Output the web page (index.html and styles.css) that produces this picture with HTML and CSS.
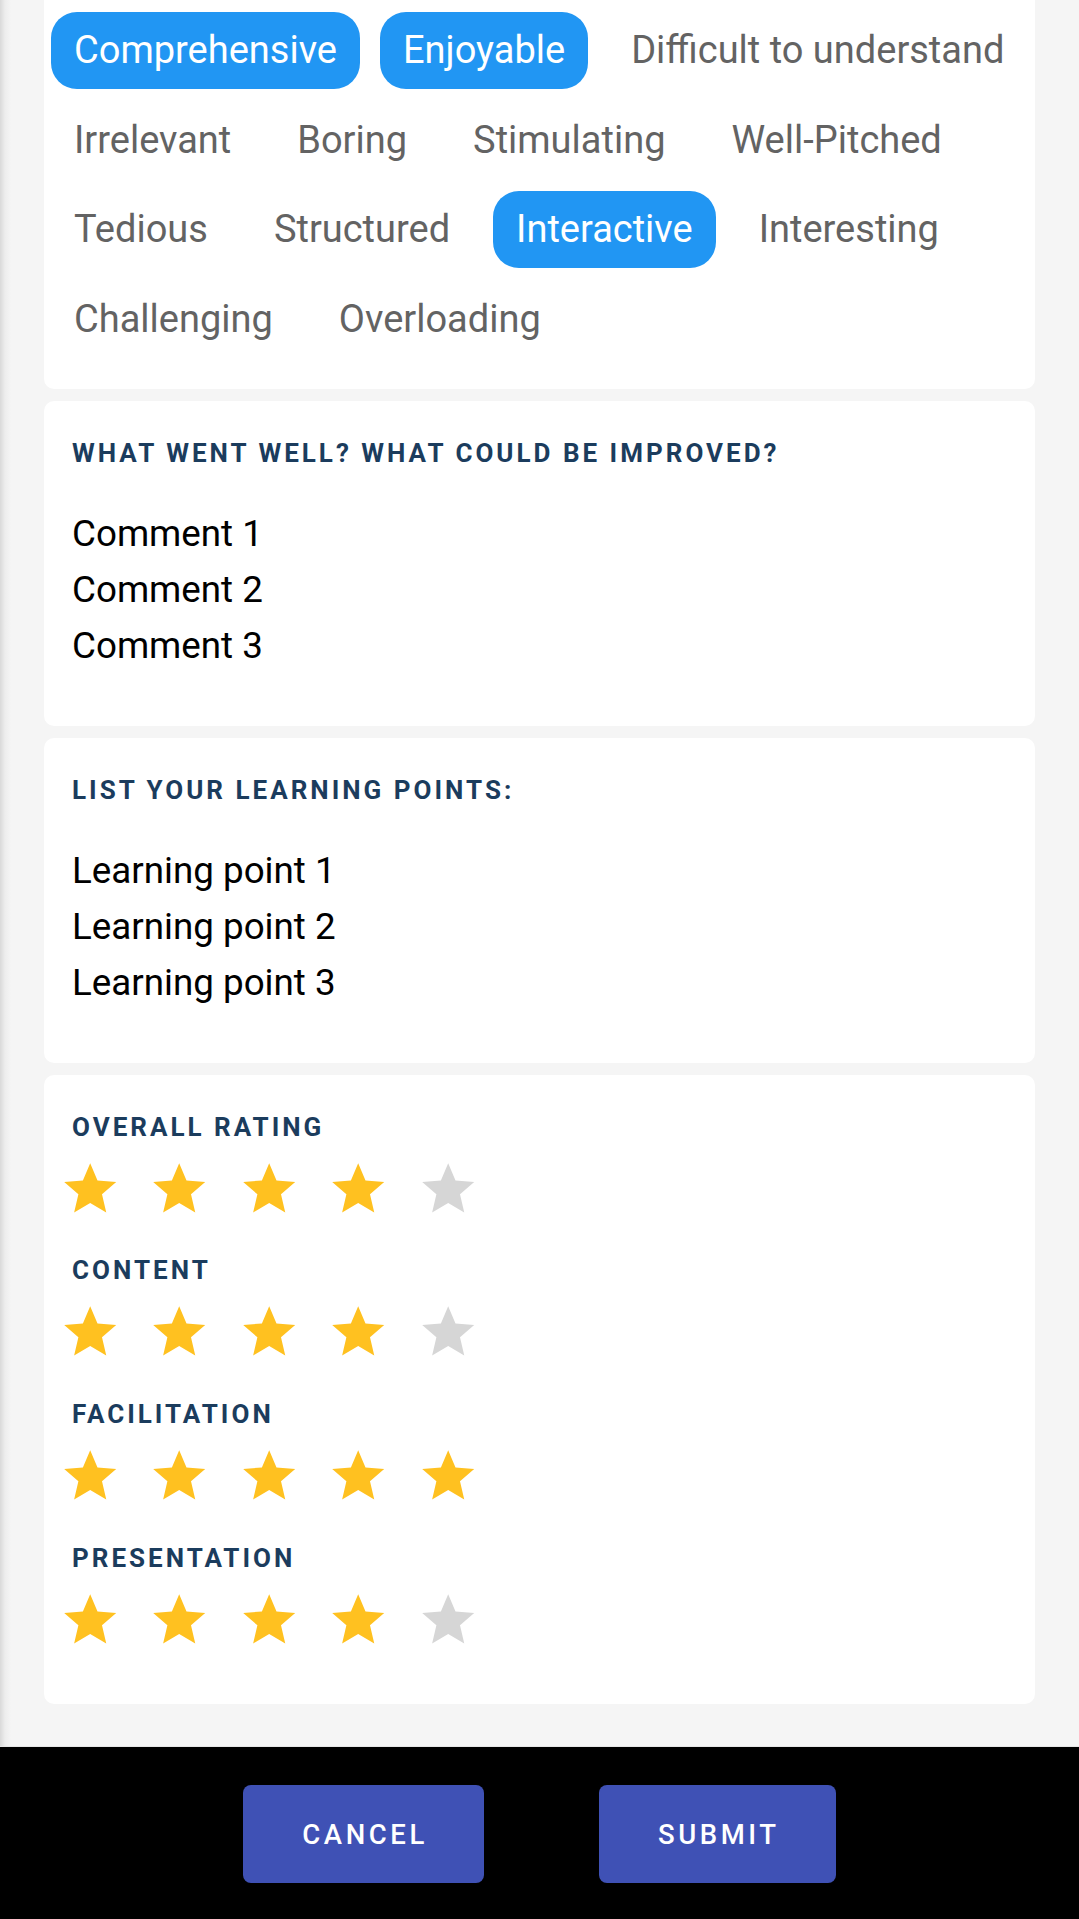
FILE: index.html
```html
<!DOCTYPE html>
<html lang="en">
<head>
<meta charset="utf-8">
<title>Feedback</title>
<link rel="stylesheet" href="styles.css">
</head>
<body>
<div class="screen">
  <main class="content">
    <section class="card card-tags">
      <div class="tags">
        <span class="tag on">Comprehensive</span>
        <span class="tag on">Enjoyable</span>
        <span class="tag">Difficult to understand</span>
        <span class="tag">Irrelevant</span>
        <span class="tag">Boring</span>
        <span class="tag">Stimulating</span>
        <span class="tag">Well-Pitched</span>
        <span class="tag">Tedious</span>
        <span class="tag">Structured</span>
        <span class="tag on">Interactive</span>
        <span class="tag">Interesting</span>
        <span class="tag">Challenging</span>
        <span class="tag">Overloading</span>
      </div>
    </section>

    <section class="card card-text">
      <h2 class="label">WHAT WENT WELL? WHAT COULD BE IMPROVED?</h2>
      <ul class="lines">
        <li>Comment 1</li>
        <li>Comment 2</li>
        <li>Comment 3</li>
      </ul>
    </section>

    <section class="card card-text">
      <h2 class="label">LIST YOUR LEARNING POINTS:</h2>
      <ul class="lines">
        <li>Learning point 1</li>
        <li>Learning point 2</li>
        <li>Learning point 3</li>
      </ul>
    </section>

    <section class="card card-rating">
      <div class="rating">
        <h2 class="label">OVERALL RATING</h2>
        <div class="stars">
          <svg class="star on" viewBox="0 0 24 24"><path d="M12 17.27L18.18 21l-1.64-7.03L22 9.24l-7.19-.61L12 2 9.19 8.63 2 9.24l5.46 4.730L5.82 21z"/></svg>
          <svg class="star on" viewBox="0 0 24 24"><path d="M12 17.27L18.18 21l-1.64-7.03L22 9.24l-7.19-.61L12 2 9.19 8.63 2 9.24l5.46 4.73L5.82 21z"/></svg>
          <svg class="star on" viewBox="0 0 24 24"><path d="M12 17.27L18.18 21l-1.64-7.03L22 9.24l-7.19-.61L12 2 9.19 8.63 2 9.24l5.46 4.73L5.82 21z"/></svg>
          <svg class="star on" viewBox="0 0 24 24"><path d="M12 17.27L18.18 21l-1.64-7.03L22 9.24l-7.19-.61L12 2 9.19 8.63 2 9.24l5.46 4.73L5.82 21z"/></svg>
          <svg class="star" viewBox="0 0 24 24"><path d="M12 17.27L18.18 21l-1.64-7.03L22 9.24l-7.19-.61L12 2 9.19 8.63 2 9.24l5.46 4.73L5.82 21z"/></svg>
        </div>
      </div>
      <div class="rating">
        <h2 class="label">CONTENT</h2>
        <div class="stars">
          <svg class="star on" viewBox="0 0 24 24"><path d="M12 17.27L18.18 21l-1.64-7.03L22 9.24l-7.19-.61L12 2 9.19 8.63 2 9.24l5.46 4.73L5.82 21z"/></svg>
          <svg class="star on" viewBox="0 0 24 24"><path d="M12 17.27L18.18 21l-1.64-7.03L22 9.24l-7.19-.61L12 2 9.19 8.63 2 9.24l5.46 4.73L5.82 21z"/></svg>
          <svg class="star on" viewBox="0 0 24 24"><path d="M12 17.27L18.18 21l-1.64-7.03L22 9.24l-7.19-.61L12 2 9.19 8.63 2 9.24l5.46 4.73L5.82 21z"/></svg>
          <svg class="star on" viewBox="0 0 24 24"><path d="M12 17.27L18.18 21l-1.64-7.03L22 9.24l-7.19-.61L12 2 9.19 8.63 2 9.24l5.46 4.73L5.82 21z"/></svg>
          <svg class="star" viewBox="0 0 24 24"><path d="M12 17.27L18.18 21l-1.64-7.03L22 9.24l-7.19-.61L12 2 9.19 8.63 2 9.24l5.46 4.73L5.82 21z"/></svg>
        </div>
      </div>
      <div class="rating">
        <h2 class="label">FACILITATION</h2>
        <div class="stars">
          <svg class="star on" viewBox="0 0 24 24"><path d="M12 17.27L18.18 21l-1.64-7.03L22 9.24l-7.19-.61L12 2 9.19 8.63 2 9.24l5.46 4.73L5.82 21z"/></svg>
          <svg class="star on" viewBox="0 0 24 24"><path d="M12 17.27L18.18 21l-1.64-7.03L22 9.24l-7.19-.61L12 2 9.19 8.63 2 9.24l5.46 4.73L5.82 21z"/></svg>
          <svg class="star on" viewBox="0 0 24 24"><path d="M12 17.27L18.18 21l-1.64-7.03L22 9.24l-7.19-.61L12 2 9.19 8.63 2 9.24l5.46 4.73L5.82 21z"/></svg>
          <svg class="star on" viewBox="0 0 24 24"><path d="M12 17.27L18.18 21l-1.64-7.03L22 9.24l-7.19-.61L12 2 9.19 8.63 2 9.24l5.46 4.73L5.82 21z"/></svg>
          <svg class="star on" viewBox="0 0 24 24"><path d="M12 17.27L18.18 21l-1.64-7.03L22 9.24l-7.19-.61L12 2 9.19 8.63 2 9.24l5.46 4.73L5.82 21z"/></svg>
        </div>
      </div>
      <div class="rating">
        <h2 class="label">PRESENTATION</h2>
        <div class="stars">
          <svg class="star on" viewBox="0 0 24 24"><path d="M12 17.27L18.18 21l-1.64-7.03L22 9.24l-7.19-.61L12 2 9.19 8.63 2 9.24l5.46 4.73L5.82 21z"/></svg>
          <svg class="star on" viewBox="0 0 24 24"><path d="M12 17.27L18.18 21l-1.64-7.03L22 9.24l-7.19-.61L12 2 9.19 8.63 2 9.24l5.46 4.73L5.82 21z"/></svg>
          <svg class="star on" viewBox="0 0 24 24"><path d="M12 17.27L18.18 21l-1.64-7.03L22 9.24l-7.19-.61L12 2 9.19 8.63 2 9.24l5.46 4.73L5.82 21z"/></svg>
          <svg class="star on" viewBox="0 0 24 24"><path d="M12 17.27L18.18 21l-1.64-7.03L22 9.24l-7.19-.61L12 2 9.19 8.63 2 9.24l5.46 4.73L5.82 21z"/></svg>
          <svg class="star" viewBox="0 0 24 24"><path d="M12 17.27L18.18 21l-1.64-7.03L22 9.24l-7.19-.61L12 2 9.19 8.63 2 9.24l5.46 4.73L5.82 21z"/></svg>
        </div>
      </div>
    </section>
  </main>

  <footer class="footer">
    <button class="btn" type="button">CANCEL</button>
    <button class="btn" type="button">SUBMIT</button>
  </footer>
</div>
</body>
</html>
```

FILE: styles.css
```css
* {
  box-sizing: border-box;
}

html, body {
  margin: 0;
  padding: 0;
}

body {
  width: 1079px;
  height: 1919px;
  overflow: hidden;
  font-family: Roboto, "Liberation Sans", Arial, sans-serif;
  background: #f5f5f5;
}

.screen {
  display: flex;
  flex-direction: column;
  height: 1919px;
}

.content {
  flex: 1;
  padding: 0 44px;
  background: linear-gradient(90deg, #d9d9d9 0px, #ededed 5px, #f5f5f5 11px);
}

.card {
  background: #ffffff;
  border-radius: 10px;
  margin-bottom: 12px;
}

/* ---------- tag chips ---------- */
.card-tags {
  border-radius: 0 0 10px 10px;
  padding: 12px 7px 31px 7px;
}

.tags {
  display: flex;
  flex-wrap: wrap;
  gap: 12.5px 20px;
}

.tag {
  display: inline-block;
  height: 77px;
  line-height: 77px;
  padding: 0 23px;
  border-radius: 26px;
  font-size: 38px;
  color: #636363;
  white-space: nowrap;
}

.tag.on {
  background: #2196f3;
  color: #ffffff;
}

/* ---------- labels ---------- */
.label {
  margin: 0;
  font-size: 26px;
  line-height: 30px;
  font-weight: 700;
  letter-spacing: 3px;
  color: #1b3c5d;
}

/* ---------- text cards ---------- */
.card-text {
  padding: 37px 28px 52px 28px;
}

.lines {
  list-style: none;
  margin: 38px 0 0 0;
  padding: 0;
}

.lines li {
  font-size: 36.75px;
  line-height: 56px;
  color: #000000;
}

/* ---------- ratings ---------- */
.card-rating {
  padding: 37px 28px 52px 28px;
  display: flex;
  flex-direction: column;
  gap: 35.5px;
}

.stars {
  display: flex;
  gap: 27px;
  margin: 16px 0 0 -13px;
}

.star {
  width: 62.4px;
  height: 62.4px;
  fill: #d6d6d6;
  display: block;
}

.star.on {
  fill: #ffc120;
}

/* ---------- footer ---------- */
.footer {
  height: 173px;
  background: #000000;
  border-top: 1px solid #e6e6e6;
  display: flex;
  justify-content: center;
  align-items: flex-start;
  gap: 115px;
  padding-top: 38px;
}

.btn {
  height: 98px;
  padding: 0 56px 0 59px;
  border: none;
  border-radius: 8px;
  background: #3f51b5;
  color: #ffffff;
  font-family: Roboto, "Liberation Sans", Arial, sans-serif;
  font-size: 27.5px;
  font-weight: 500;
  letter-spacing: 3.6px;
}
```
